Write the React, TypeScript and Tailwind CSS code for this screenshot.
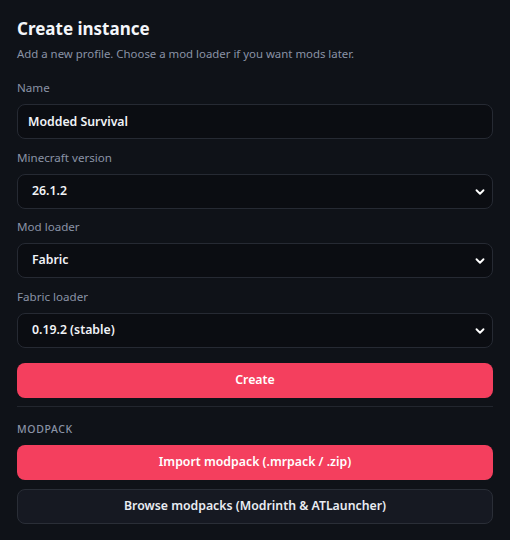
import { useState } from 'react';
import { ChevronDown } from 'lucide-react';

const font = { fontFamily: '"Segoe UI", "Noto Sans", "Open Sans", sans-serif' };

function Label({ children }: { children: React.ReactNode }) {
  return <div className="text-[11.6px] leading-4 text-[#8a93a6] mb-2">{children}</div>;
}

function Select({ value, options, onChange }: { value: string; options: string[]; onChange: (v: string) => void }) {
  return (
    <label className="relative flex items-center w-full h-[35px] rounded-lg border border-[#262a33] bg-[#0b0d12] pl-[14px] pr-8 text-[12.3px] font-semibold text-[#f1f3f7]">
      <span>{value}</span>
      <select
        value={value}
        onChange={(e) => onChange(e.target.value)}
        className="absolute inset-0 opacity-0 cursor-pointer"
      >
        {options.map((o) => (
          <option key={o}>{o}</option>
        ))}
      </select>
      <ChevronDown size={14} strokeWidth={3.2} className="absolute right-[5px] top-[10px] text-white pointer-events-none" />
    </label>
  );
}

export default function App() {
  const [name, setName] = useState('Modded Survival');
  const [version, setVersion] = useState('26.1.2');
  const [loader, setLoader] = useState('Fabric');
  const [fabric, setFabric] = useState('0.19.2 (stable)');

  return (
    <div style={font} className="min-h-screen w-[510px] h-[540px] bg-[#0f1218] px-[17px] pt-[17px] overflow-hidden">
      <h1 className="text-[17px] leading-6 font-bold text-[#f4f6fa]">Create instance</h1>
      <p className="mt-[5px] text-[11.4px] leading-4 text-[#8a93a6]">
        Add a new profile. Choose a mod loader if you want mods later.
      </p>

      <div className="mt-[18px] flex flex-col gap-[10.5px]">
        <div>
          <Label>Name</Label>
          <input
            value={name}
            onChange={(e) => setName(e.target.value)}
            className="w-full h-[35px] rounded-lg border border-[#262a33] bg-[#0b0d12] px-[10px] text-[12.3px] font-semibold text-[#f1f3f7] outline-none"
          />
        </div>
        <div>
          <Label>Minecraft version</Label>
          <Select value={version} options={['26.1.2', '26.1.1', '1.21.4']} onChange={setVersion} />
        </div>
        <div>
          <Label>Mod loader</Label>
          <Select value={loader} options={['Vanilla', 'Fabric', 'Forge', 'NeoForge', 'Quilt']} onChange={setLoader} />
        </div>
        <div>
          <Label>Fabric loader</Label>
          <Select value={fabric} options={['0.19.2 (stable)', '0.19.1', '0.18.4']} onChange={setFabric} />
        </div>
      </div>

      <button className="mt-[15px] w-full h-[35px] rounded-lg bg-[#f43f5e] text-[12.3px] font-semibold text-white">
        Create
      </button>

      <div className="mt-2 border-t border-[#22262e]" />

      <div className="mt-[14px] text-[10.5px] leading-4 tracking-[0.06em] font-medium text-[#8a93a6]">MODPACK</div>

      <div className="mt-2 flex flex-col gap-[9px]">
        <button className="w-full h-[35px] rounded-lg bg-[#f43f5e] text-[12.3px] font-semibold text-white">
          Import modpack (.mrpack / .zip)
        </button>
        <button className="w-full h-[35px] rounded-lg border border-[#2a2e37] bg-[#161922] text-[12.3px] font-semibold text-[#e9ecf2]">
          Browse modpacks (Modrinth &amp; ATLauncher)
        </button>
      </div>
    </div>
  );
}
